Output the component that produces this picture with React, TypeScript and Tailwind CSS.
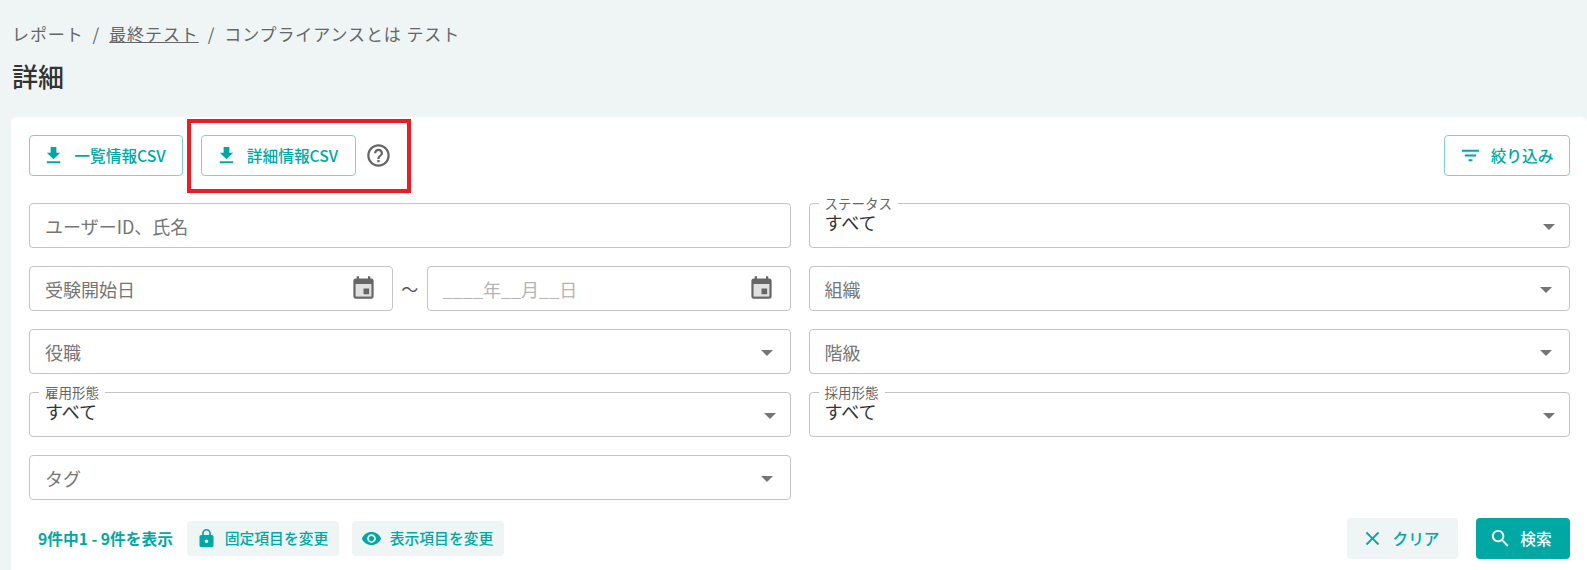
import React from "react"

const download = "M19 9h-4V3H9v6H5l7 7 7-7zM5 18v2h14v-2H5z"
const help =
  "M11 18h2v-2h-2v2zm1-16C6.48 2 2 6.48 2 12s4.48 10 10 10 10-4.48 10-10S17.52 2 12 2zm0 18c-4.41 0-8-3.59-8-8s3.59-8 8-8 8 3.59 8 8-3.59 8-8 8zm0-14c-2.21 0-4 1.79-4 4h2c0-1.1.9-2 2-2s2 .9 2 2c0 2-3 1.75-3 5h2c0-2.25 3-2.5 3-5 0-2.21-1.79-4-4-4z"
const event =
  "M17 12h-5v5h5v-5zM16 1v2H8V1H6v2H5c-1.11 0-1.99.9-1.99 2L3 19c0 1.1.89 2 2 2h14c1.1 0 2-.9 2-2V5c0-1.1-.9-2-2-2h-1V1h-2zm3 18H5V8h14v11z"
const filter = "M10 18h4v-2h-4v2zM3 6v2h18V6H3zm3 7h12v-2H6v2z"
const lock =
  "M18 8h-1V6c0-2.76-2.24-5-5-5S7 3.24 7 6v2H6c-1.1 0-2 .9-2 2v10c0 1.1.9 2 2 2h12c1.1 0 2-.9 2-2V10c0-1.1-.9-2-2-2zm-6 9c-1.1 0-2-.9-2-2s.9-2 2-2 2 .9 2 2-.9 2-2 2zm3.1-9H8.9V6c0-1.71 1.39-3.1 3.1-3.1 1.71 0 3.1 1.39 3.1 3.1v2z"
const eye =
  "M12 4.5C7 4.5 2.73 7.61 1 12c1.73 4.39 6 7.5 11 7.5s9.27-3.11 11-7.5c-1.73-4.39-6-7.5-11-7.5zM12 17c-2.76 0-5-2.24-5-5s2.24-5 5-5 5 2.24 5 5-2.24 5-5 5zm0-8c-1.66 0-3 1.34-3 3s1.34 3 3 3 3-1.34 3-3-1.34-3-3-3z"
const close =
  "M19 6.41L17.59 5 12 10.59 6.41 5 5 6.41 10.59 12 5 17.59 6.41 19 12 13.41 17.59 19 19 17.59 13.41 12z"
const search =
  "M15.5 14h-.79l-.28-.27C15.41 12.59 16 11.11 16 9.5 16 5.91 13.09 3 9.5 3S3 5.91 3 9.5 5.91 16 9.5 16c1.61 0 3.09-.59 4.23-1.57l.27.28v.79l5 4.99L20.49 19l-4.99-5zm-6 0C7.01 14 5 11.99 5 9.5S7.01 5 9.5 5 14 7.01 14 9.5 11.99 14 9.5 14z"

function Icon({ d, className }: { d: string; className: string }) {
  return (
    <svg viewBox="0 0 24 24" fill="currentColor" className={className}>
      <path d={d} />
    </svg>
  )
}

function Caret() {
  return <span className="mt-[2px] h-0 w-0 border-x-[6px] border-t-[6px] border-x-transparent border-t-[#757575]"></span>
}

function Field({ label, value }: { label?: string; value: string }) {
  return (
    <div className={"relative flex h-[45px] items-center justify-between rounded-[4px] border border-[#c4c4c4] bg-white pl-[15px] " + (label ? "pr-[14px]" : "pr-[17px]")}>
      {label && (
        <span className="absolute top-[-8px] left-[9px] bg-white px-[6px] text-[13.5px] leading-[14px] text-[#666]">
          {label}
        </span>
      )}
      {label ? (
        <span className="mt-[-7px] text-[18px] leading-[20px] text-[#333]">{value}</span>
      ) : (
        <span className="text-[18px] leading-[26px] text-[#757575]">{value}</span>
      )}
      <Caret />
    </div>
  )
}

function DateField({ value, muted }: { value: string; muted?: boolean }) {
  return (
    <div className="flex h-[45px] flex-1 items-center justify-between rounded-[4px] border border-[#c4c4c4] bg-white pr-[15px] pl-[15px]">
      <span className={"text-[18px] leading-[26px] " + (muted ? "text-[#b5b5b5]" : "text-[#757575]")}>{value}</span>
      <svg viewBox="0 0 24 24" fill="currentColor" className="h-[27px] w-[27px] text-[#666]">
        <rect x="5" y="8" width="14" height="11" opacity="0.2" />
        <path d={event} />
      </svg>
    </div>
  )
}

function OutlineButton({ icon, label, className }: { icon: string; label: string; className: string }) {
  return (
    <button className={"flex h-[41px] items-center justify-center rounded-[4px] border border-[#7fd0cd] bg-white text-[15.7px] font-medium text-[#00a8a3] " + className}>
      <Icon d={icon} className="mr-[9px] h-[23px] w-[23px]" />
      {label}
    </button>
  )
}

function GreyButton({ icon, label }: { icon: string; label: string }) {
  return (
    <button className="flex h-[35px] w-[152px] items-center justify-center rounded-[4px] bg-[#eff5f5] pr-[2px] text-[14.8px] font-medium text-[#00a8a3]">
      <Icon d={icon} className="mr-[8px] h-[21px] w-[21px]" />
      {label}
    </button>
  )
}

export default function App() {
  return (
    <div className="h-[570px] overflow-hidden bg-[#eff5f5] pl-[11px] font-['Noto_Sans_CJK_JP','Noto_Sans',sans-serif]">
      <div className="flex h-[46px] items-end gap-[9px] pl-[1px] text-[17px] leading-[24px] tracking-[0.9px] text-[#666]">
        <span>レポート</span>
        <span>/</span>
        <span className="underline">最終テスト</span>
        <span>/</span>
        <span>コンプライアンスとは テスト</span>
      </div>
      <h1 className="mt-[11px] mb-[22px] pl-[1px] text-[26px] leading-[38px] font-medium text-[#333]">詳細</h1>
      <div className="relative rounded-t-[6px] bg-white pt-[18px] pr-[17px] pb-[20px] pl-[18px]">
        <div className="absolute top-[2px] left-[176px] h-[74px] w-[224px] border-[4px] border-[#ea1c24]"></div>
        <div className="flex items-center">
          <OutlineButton icon={download} label="一覧情報CSV" className="w-[154px] pr-[4px]" />
          <OutlineButton icon={download} label="詳細情報CSV" className="ml-[18px] w-[155px] pr-[4px]" />
          <Icon d={help} className="ml-[9px] h-[27px] w-[27px] text-[#666]" />
          <OutlineButton icon={filter} label="絞り込み" className="ml-auto w-[126px] pr-[2px]" />
        </div>
        <div className="mt-[27px] grid grid-cols-2 gap-x-[18px] gap-y-[18px]">
          <div className="flex h-[45px] items-center rounded-[4px] border border-[#c4c4c4] bg-white pl-[15px] text-[18px] leading-[26px] text-[#757575]">
            ユーザーID、氏名
          </div>
          <Field label="ステータス" value="すべて" />
          <div className="flex items-center">
            <DateField value="受験開始日" />
            <span className="w-[34px] text-center text-[17px] text-[#555]">〜</span>
            <DateField value="____年__月__日" muted />
          </div>
          <Field value="組織" />
          <Field value="役職" />
          <Field value="階級" />
          <Field label="雇用形態" value="すべて" />
          <Field label="採用形態" value="すべて" />
          <Field value="タグ" />
        </div>
        <div className="mt-[18px] flex items-center">
          <span className="ml-[9px] w-[149px] text-[15.7px] font-bold text-[#00a8a3]">9件中1 - 9件を表示</span>
          <GreyButton icon={lock} label="固定項目を変更" />
          <div className="ml-[13px]">
            <GreyButton icon={eye} label="表示項目を変更" />
          </div>
          <button className="ml-auto flex h-[41px] w-[111px] items-center justify-center rounded-[4px] bg-[#eff5f5] pr-[4px] text-[15.7px] font-medium text-[#00a8a3]">
            <Icon d={close} className="mr-[8px] h-[23px] w-[23px]" />
            クリア
          </button>
          <button className="ml-[18px] flex h-[41px] w-[94px] items-center justify-center rounded-[4px] bg-[#00a8a3] pr-[5px] text-[15.7px] font-medium text-white">
            <Icon d={search} className="mr-[8px] h-[23px] w-[23px]" />
            検索
          </button>
        </div>
      </div>
    </div>
  )
}
